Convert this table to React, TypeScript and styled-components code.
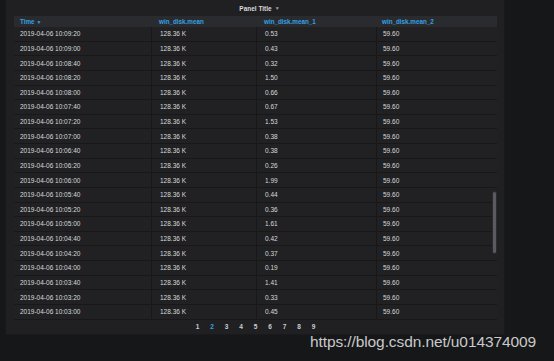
import React from 'react';
import styled, { createGlobalStyle } from 'styled-components';

const GlobalStyle = createGlobalStyle`
  html, body {
    margin: 0;
    padding: 0;
    background: #161719;
    font-family: 'Liberation Sans', Arial, sans-serif;
  }
`;

const Page = styled.div`
  position: relative;
  width: 554px;
  height: 361px;
  padding: 0 49px 26px 5px;
  box-sizing: border-box;
  overflow: hidden;
`;

const Panel = styled.div`
  height: 100%;
  background: #202023;
  border: 1px solid #1a1a1c;
  border-top: none;
  box-sizing: border-box;
  display: flex;
  flex-direction: column;
  padding: 0 7px 0 8px;
`;

const TitleBar = styled.div`
  height: 16px;
  display: flex;
  align-items: center;
  justify-content: center;
  gap: 3px;
  padding-left: 8px;
  color: #d8d9da;
  font-size: 6.5px;
  font-weight: bold;
`;

const Caret = styled.span<{ $blue?: boolean }>`
  font-size: 5px;
  color: ${({ $blue }) => ($blue ? '#33a2e5' : '#9fa0a3')};
`;

const Table = styled.div`
  position: relative;
  display: grid;
  grid-template-columns: 137px 105px 120px 1fr;
`;

const HeadCell = styled.div<{ $pad: number }>`
  height: 11px;
  background: #2a2b2e;
  color: #33a2e5;
  font-size: 6.3px;
  font-weight: bold;
  display: flex;
  align-items: center;
  padding-left: ${({ $pad }) => $pad}px;
  gap: 2px;
`;

const Cell = styled.div<{ $divider?: boolean; $pad: number }>`
  height: 14.63px;
  box-sizing: border-box;
  border-bottom: 1px solid #18181a;
  border-left: ${({ $divider }) => ($divider ? '1px solid #18181a' : 'none')};
  color: #d8d9da;
  font-size: 6.5px;
  display: flex;
  align-items: center;
  padding-left: ${({ $pad }) => $pad}px;
  background: #212124;
`;

const Scrollbar = styled.div`
  position: absolute;
  right: 1px;
  top: 176px;
  width: 3px;
  height: 61px;
  border-radius: 2px;
  background: #5a5a60;
  box-shadow: 0 0 0 1px #2a2a33;
`;

const Pager = styled.div`
  flex: 1;
  display: flex;
  justify-content: center;
  align-items: center;
`;

const PageNum = styled.span<{ $active?: boolean }>`
  width: 14.5px;
  text-align: center;
  font-size: 6.5px;
  font-weight: bold;
  color: ${({ $active }) => ($active ? '#33a2e5' : '#c7d0d9')};
`;

const Watermark = styled.div`
  position: absolute;
  left: 310px;
  top: 333px;
  font-size: 15.5px;
  color: rgba(235, 235, 235, 0.85);
  letter-spacing: -0.1px;
`;

const times = [
  '10:09:20', '10:09:00', '10:08:40', '10:08:20', '10:08:00', '10:07:40', '10:07:20',
  '10:07:00', '10:06:40', '10:06:20', '10:06:00', '10:05:40', '10:05:20', '10:05:00',
  '10:04:40', '10:04:20', '10:04:00', '10:03:40', '10:03:20', '10:03:00',
];
const mean1 = [
  '0.53', '0.43', '0.32', '1.50', '0.66', '0.67', '1.53', '0.38', '0.38', '0.26',
  '1.99', '0.44', '0.36', '1.61', '0.42', '0.37', '0.19', '1.41', '0.33', '0.45',
];

export default function App() {
  return (
    <>
      <GlobalStyle />
      <Page>
        <Panel>
          <TitleBar>
            Panel Title <Caret>▼</Caret>
          </TitleBar>
          <Table>
            <HeadCell $pad={6}>
              Time <Caret $blue>▼</Caret>
            </HeadCell>
            <HeadCell $pad={8}>win_disk.mean</HeadCell>
            <HeadCell $pad={8}>win_disk.mean_1</HeadCell>
            <HeadCell $pad={6}>win_disk.mean_2</HeadCell>
            {times.map((t, i) => (
              <React.Fragment key={t}>
                <Cell $pad={6}>2019-04-06 {t}</Cell>
                <Cell $divider $pad={8}>128.36 K</Cell>
                <Cell $divider $pad={8}>{mean1[i]}</Cell>
                <Cell $divider $pad={6}>59.60</Cell>
              </React.Fragment>
            ))}
            <Scrollbar />
          </Table>
          <Pager>
            {[1, 2, 3, 4, 5, 6, 7, 8, 9].map((n) => (
              <PageNum key={n} $active={n === 2}>
                {n}
              </PageNum>
            ))}
          </Pager>
        </Panel>
        <Watermark>https://blog.csdn.net/u014374009</Watermark>
      </Page>
    </>
  );
}
